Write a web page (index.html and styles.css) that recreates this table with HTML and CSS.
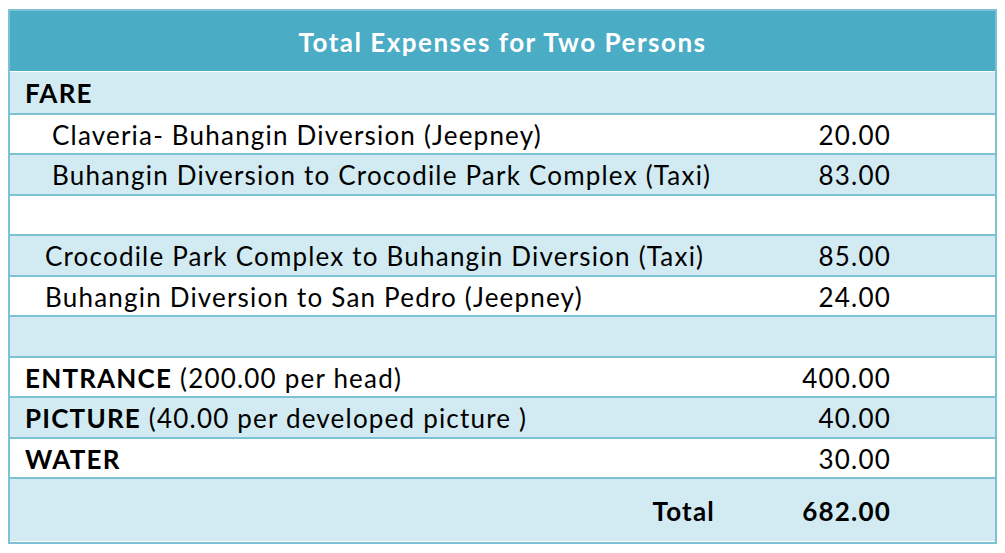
FILE: index.html
```html
<!DOCTYPE html>
<html lang="en">
<head>
<meta charset="utf-8">
<title>Total Expenses for Two Persons</title>
<link rel="stylesheet" href="styles.css">
</head>
<body>
<div class="sheet">
  <div class="title">Total Expenses for Two Persons</div>
  <div class="row shade first"><span class="label"><b>FARE</b></span><span class="amount"></span></div>
  <div class="row"><span class="label indent-a">Claveria- Buhangin Diversion (Jeepney)</span><span class="amount">20.00</span></div>
  <div class="row shade"><span class="label indent-a">Buhangin Diversion to Crocodile Park Complex (Taxi)</span><span class="amount">83.00</span></div>
  <div class="row"><span class="label"></span><span class="amount"></span></div>
  <div class="row shade"><span class="label indent-b">Crocodile Park Complex to Buhangin Diversion (Taxi)</span><span class="amount">85.00</span></div>
  <div class="row"><span class="label indent-b">Buhangin Diversion to San Pedro (Jeepney)</span><span class="amount">24.00</span></div>
  <div class="row shade"><span class="label"></span><span class="amount"></span></div>
  <div class="row"><span class="label"><b>ENTRANCE</b> (200.00 per head)</span><span class="amount">400.00</span></div>
  <div class="row shade"><span class="label"><b>PICTURE</b> (40.00 per developed picture )</span><span class="amount">40.00</span></div>
  <div class="row"><span class="label"><b>WATER</b></span><span class="amount">30.00</span></div>
  <div class="row shade total"><span class="label total-label"><b>Total</b></span><span class="amount"><b>682.00</b></span></div>
</div>
</body>
</html>
```
FILE: styles.css
```css
html, body {
  margin: 0;
  padding: 0;
  background: #ffffff;
}

body {
  padding: 9px 8px 0 8px;
  font-family: Lato, "Open Sans", "Liberation Sans", sans-serif;
  font-size: 26px;
  letter-spacing: 1.2px;
  color: #000000;
}

.sheet {
  width: 989px;
  box-sizing: border-box;
  border: 2px solid #7cc1d4;
  display: flex;
  flex-direction: column;
}

.title {
  height: 61px;
  box-sizing: border-box;
  border-bottom: 1px solid #ffffff;
  background: #4bacc6;
  color: #ffffff;
  font-weight: 700;
  letter-spacing: 1.5px;
  display: flex;
  align-items: center;
  justify-content: center;
  padding-top: 2px;
}

.row {
  display: grid;
  grid-template-columns: 1fr 275px;
  align-items: center;
  height: 40.5px;
  box-sizing: border-box;
  border-top: 2px solid #7cc1d4;
  padding-top: 2px;
  background: #ffffff;
}

.row.first {
  border-top: none;
}

.row.shade {
  background: #d2eaf1;
}

.row.total {
  height: 65px;
  border-bottom: 1px solid #ffffff;
}

.label {
  padding-left: 15px;
  white-space: nowrap;
}

.indent-a {
  padding-left: 42px;
}

.indent-b {
  padding-left: 35px;
}

.total-label {
  text-align: right;
  padding-right: 5px;
}

.amount {
  text-align: right;
  padding-right: 104px;
}

b {
  font-weight: 700;
}
```
